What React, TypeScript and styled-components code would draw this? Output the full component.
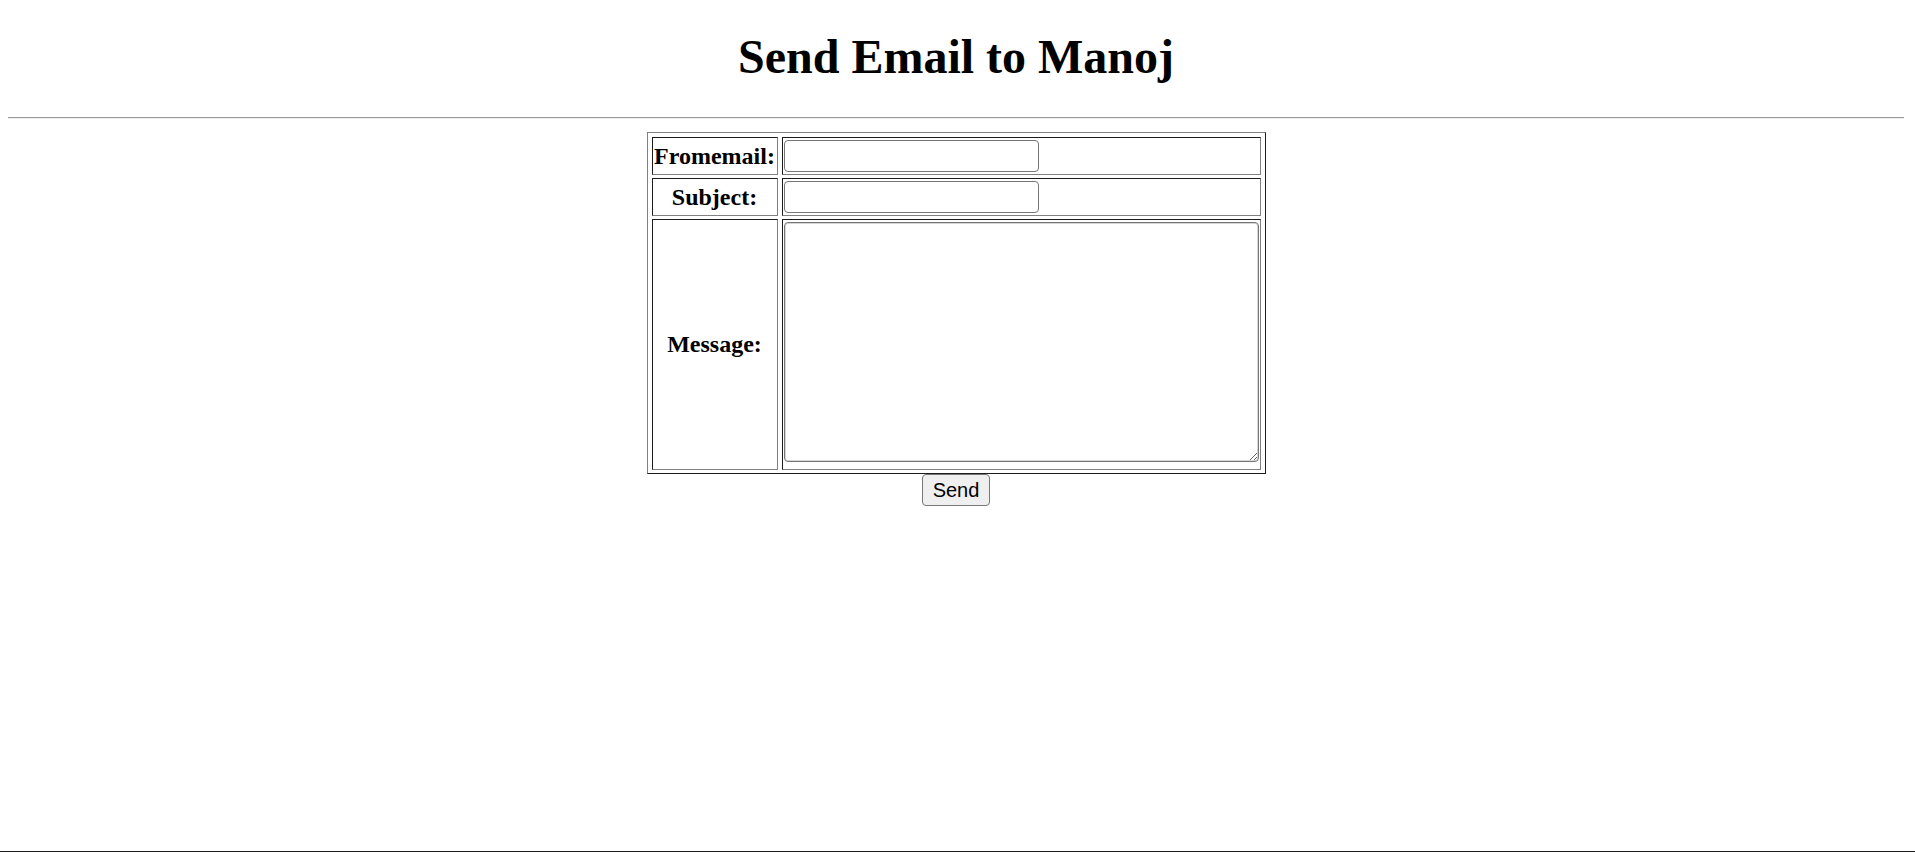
import React from "react";
import styled, { createGlobalStyle } from "styled-components";

const GlobalStyle = createGlobalStyle`
  html {
    height: 100%;
    box-sizing: border-box;
    border-bottom: 1px solid #1c1c1c;
    background: #ffffff;
  }
  body {
    margin: 8px 11px 8px 8px;
    font-family: "Liberation Serif", "Times New Roman", serif;
    color: #000000;
    background: #ffffff;
  }
`;

const Page = styled.div`
  display: flex;
  flex-direction: column;
`;

const Title = styled.h1`
  margin: 21px 0 0;
  font-size: 48px;
  line-height: 56px;
  font-weight: bold;
  text-align: center;
`;

const Rule = styled.hr`
  margin: 32px 0 13px;
  height: 0;
  border: none;
  border-top: 1px solid #9a9a9a;
  border-bottom: 1px solid #eeeeee;
`;

const Form = styled.form`
  display: flex;
  flex-direction: column;
  align-items: center;
`;

const Table = styled.table`
  border-collapse: separate;
  border-spacing: 4px 3px;
  padding-top: 1px;
  border: 1px solid;
  border-color: #808080 #1c1c1c #1c1c1c #808080;
`;

const cellBorder = `
  border: 1px solid;
  border-color: #1c1c1c #808080 #808080 #1c1c1c;
  padding: 2px 1px;
`;

const Label = styled.th`
  ${cellBorder}
  width: 122px;
  font-size: 24px;
  font-weight: bold;
  text-align: center;
  vertical-align: middle;
  white-space: nowrap;
`;

const Field = styled.td`
  ${cellBorder}
  width: 475px;
  vertical-align: middle;
`;

const TextInput = styled.input`
  display: block;
  box-sizing: border-box;
  width: 255px;
  height: 32px;
  margin: 0;
  padding: 1px 3px;
  border: 1px solid #767676;
  border-radius: 4px;
  font-family: "Liberation Sans", Arial, sans-serif;
  font-size: 20px;
  background: #ffffff;
`;

const MessageBox = styled.textarea`
  display: block;
  box-sizing: border-box;
  width: 100%;
  height: 240px;
  margin: 0 0 5px;
  padding: 3px;
  border: 1px solid #767676;
  box-shadow: inset 0 0 0 1px #d6d6d6;
  border-radius: 4px;
  font-family: "Liberation Mono", monospace;
  font-size: 20px;
  background: #ffffff;
`;

const SendButton = styled.button`
  box-sizing: border-box;
  height: 32px;
  padding: 3px 10px;
  border: 1px solid #767676;
  border-radius: 4px;
  background: #efefef;
  color: #000000;
  font-family: "Liberation Sans", Arial, sans-serif;
  font-size: 20px;
  line-height: 24px;
`;

const rows = [
  { label: "Fromemail:", name: "fromemail" },
  { label: "Subject:", name: "subject" },
];

export default function App() {
  return (
    <>
      <GlobalStyle />
      <Page>
        <Title>Send Email to Manoj</Title>
        <Rule />
        <Form onSubmit={(e) => e.preventDefault()}>
          <Table>
            <tbody>
              {rows.map((r) => (
                <tr key={r.name}>
                  <Label>{r.label}</Label>
                  <Field>
                    <TextInput type="text" name={r.name} />
                  </Field>
                </tr>
              ))}
              <tr>
                <Label>Message:</Label>
                <Field>
                  <MessageBox name="message" />
                </Field>
              </tr>
            </tbody>
          </Table>
          <SendButton type="submit">Send</SendButton>
        </Form>
      </Page>
    </>
  );
}
